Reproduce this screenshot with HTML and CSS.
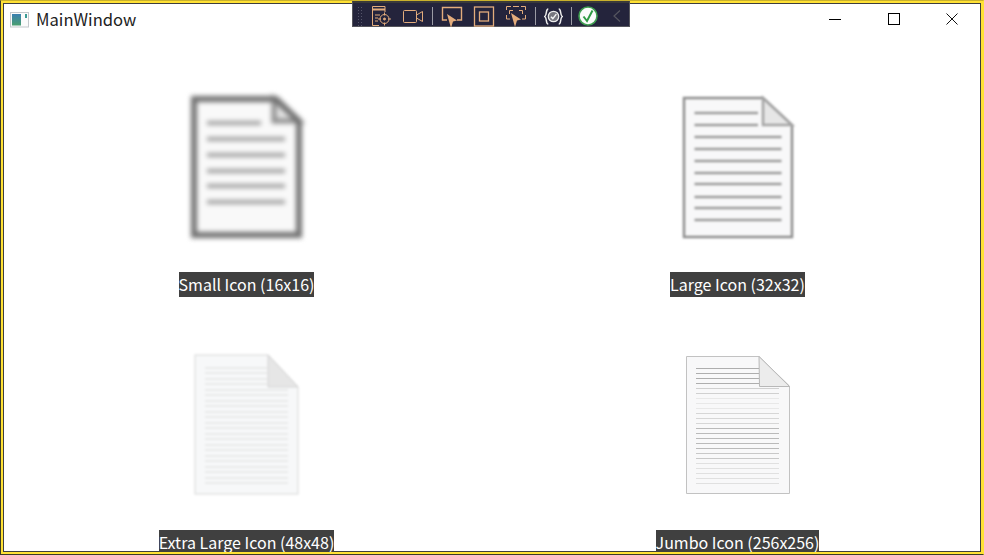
FILE: index.html
```html
<!DOCTYPE html>
<html lang="en">
<head>
<meta charset="utf-8">
<title>MainWindow</title>
<link rel="stylesheet" href="styles.css">
</head>
<body>
<div class="screen">
  <div class="frame">
    <div class="window">
      <header class="titlebar">
        <svg class="app-icon" width="20" height="16" viewBox="0 0 20 16">
          <defs><linearGradient id="appg" x1="0" y1="0" x2="0" y2="1"><stop offset="0" stop-color="#3a7fb0"/><stop offset="1" stop-color="#4a9f70"/></linearGradient></defs>
          <rect x="0.500" y="0.500" width="18" height="14.500" fill="#fbfbfb" stroke="#c4c8cc"/>
          <rect x="2" y="2" width="9" height="11.500" fill="url(#appg)"/>
          <rect x="15" y="2" width="2" height="4" fill="#3b9a94"/>
        </svg>
        <span class="title">MainWindow</span>
        <div class="controls">
          <button class="control" aria-label="Minimize"><svg width="12" height="12" viewBox="0 0 12 12"><path d="M0 6.500h12" stroke="#000" fill="none"/></svg></button>
          <button class="control" aria-label="Maximize"><svg width="12" height="12" viewBox="0 0 12 12"><rect x=".5" y=".5" width="11" height="11" stroke="#000" fill="none"/></svg></button>
          <button class="control" aria-label="Close"><svg width="12" height="12" viewBox="0 0 12 12"><path d="M.5.5l11 11M11.500.5l-11 11" stroke="#111" fill="none"/></svg></button>
        </div>
      </header>
      <main class="grid">
        <section class="cell">
          <svg class="doc blur-strong" width="148" height="148" viewBox="0 0 148 148">
            <path d="M21 7H103L126 29V143H21Z" fill="#f9f9f9"/>
            <path d="M101 7V29H126Z" fill="#e4e4e4" stroke="#8c8c8c" stroke-width="5"/>
            <path d="M21 7H103L126 29V143H21Z" fill="none" stroke="#707070" stroke-width="6"/>
            <path d="M34 31H88M34 47H112M34 63H112M34 79H112M34 94H112M34 110H112" stroke="#9c9c9c" stroke-width="4" fill="none"/>
          </svg>
          <span class="label">Small Icon (16x16)</span>
        </section>
        <section class="cell">
          <svg class="doc blur-mid" width="148" height="148" viewBox="1 0 148 148">
            <path d="M21 6H100L129 33V145H21Z" fill="#f8f8f9" stroke="#8e8e8e" stroke-width="2.500"/>
            <path d="M100 6L129 33H100Z" fill="#e6e6e6" stroke="#a4a4a4" stroke-width="2.500"/>
            <path d="M31.500 21H95M31.500 33H95M31.500 45H118.500M31.500 57H118.500M31.500 69H118.500M31.500 81H118.500M31.500 92H118.500M31.500 105H118.500M31.500 116H118.500M31.500 128H118.500" stroke="#9c9c9c" stroke-width="2.400" fill="none"/>
          </svg>
          <span class="label">Large Icon (32x32)</span>
        </section>
        <section class="cell">
          <svg class="doc blur-soft" width="148" height="148" viewBox="0 0 148 148">
            <path d="M22 5H95L125 37V144H22Z" fill="#f7f8f9" stroke="#e4e4e4" stroke-width="1.500"/>
            <path d="M95 5L125 37H95Z" fill="#e6e6e6" stroke="#d4d4d4"/>
            <path d="M32 18H94M32 23H94M32 29H94M32 34H94M32 40H115M32 45H115M32 51H115M32 56H115M32 62H115M32 67H115M32 73H115M32 78H115M32 84H115M32 89H115M32 95H115M32 100H115M32 106H115M32 111H115M32 117H115M32 122H115M32 128H115M32 133H115" stroke="#dcdcdc" stroke-width="1.200" fill="none"/>
          </svg>
          <span class="label">Extra Large Icon (48x48)</span>
        </section>
        <section class="cell">
          <svg class="doc" width="148" height="148" viewBox="1 0 148 148">
            <path d="M23.500 6.500H96L126.500 36V143.500H23.500Z" fill="#f8f8f9" stroke="#c2c2c2"/>
            <path d="M96 6.500L126.500 36.500H96.500Z" fill="#ececec" stroke="#b8b8b8"/>
            <g stroke-width="1" fill="none">
              <path d="M33 18.500H96M33 23.500H96M33 28.500H96M33 33.500H96" stroke="#aeaeae"/>
              <path d="M33 38.500H116M33 43.500H116" stroke="#d0d0d0"/>
              <path d="M33 48.500H116M33 53.500H116M33 58.500H116" stroke="#e8e8e8"/>
              <path d="M33 63.500H116M33 68.500H116M33 73.500H116" stroke="#d6d6d6"/>
              <path d="M33 78.500H116M33 83.500H116M33 88.500H116M33 93.500H116M33 98.500H116" stroke="#bababa"/>
              <path d="M33 103.500H116M33 108.500H116" stroke="#c8c8c8"/>
              <path d="M33 113.500H116M33 118.500H116M33 123.500H116M33 128.500H116M33 133.500H116" stroke="#e0e0e0"/>
            </g>
          </svg>
          <span class="label">Jumbo Icon (256x256)</span>
        </section>
      </main>
    </div>
  </div>
  <div class="toolbar">
    <span class="grip"></span>
    <div class="tool-group">
      <svg class="tool" width="22" height="22" viewBox="0 0 22 22" fill="none" stroke="#e3ac7c">
        <path d="M9 20.500H2.500V1.500H15V7" /><path d="M3 4.500h12" stroke-width="2"/><path d="M5 10h5M5 13h3M5 16h3"/><circle cx="14.500" cy="14" r="4.500"/><path d="M14.500 7.500v3M14.500 17.500v3M8 14h3M18 14h3"/><circle cx="14.500" cy="14" r="1" fill="#e3ac7c"/>
      </svg>
      <svg class="tool" width="22" height="22" viewBox="0 0 22 22" fill="none" stroke="#e3ac7c">
        <rect x="1.500" y="5.500" width="13" height="12" rx="1"/><path d="M14.500 10L20.500 6.500V16.500L14.500 13"/>
      </svg>
    </div>
    <span class="sep"></span>
    <div class="tool-group">
      <svg class="tool" width="22" height="22" viewBox="0 0 22 22" fill="none" stroke="#e3ac7c">
        <path d="M6 15H1.500V2.500H20.500V15H16" stroke-width="1.400"/><path d="M6 9L16 15.500L12 16.500L10 23Z" fill="#e3ac7c" stroke="none"/>
      </svg>
      <svg class="tool" width="22" height="22" viewBox="0 0 22 22" fill="none" stroke="#e3ac7c">
        <rect x="1.500" y="2" width="19" height="19" stroke-width="1.300"/><rect x="6.500" y="7" width="9" height="9" stroke-width="1.300"/>
      </svg>
      <svg class="tool" width="22" height="22" viewBox="0 0 22 22" fill="none" stroke="#e3ac7c">
        <path d="M1.500 5V1.500H6M16 1.500H20.500V5M1.500 10V14H5M20.500 10V14H17M8 1.500h6M8 5.500H4.500V9M14 5.500H17.500V9"/><path d="M6 8L16 14.500L12 15.500L10 22Z" fill="#e3ac7c" stroke="none"/>
      </svg>
    </div>
    <span class="sep"></span>
    <svg class="tool-narrow" width="19" height="21" viewBox="0 0 20 22" fill="none" stroke="#ececec">
      <path d="M4.500 3C1.500 3 3.500 9 .8 11C3.500 13 1.500 19 4.500 19M15.500 3C18.500 3 16.500 9 19.200 11C16.500 13 18.500 19 15.500 19" stroke-width="1.600"/>
      <circle cx="10" cy="11" r="5.500" fill="#77777f" stroke="#ececec" stroke-width="1.300"/><path d="M7.300 11.200L9.300 13.200L13 8.500" stroke="#f4f4f4" stroke-width="1.500"/>
    </svg>
    <span class="sep"></span>
    <svg class="tool-check" width="20" height="20" viewBox="0 0 20 20" fill="none">
      <circle cx="10" cy="10" r="9" fill="#fbfbfb" stroke="#3f9e50" stroke-width="1.600"/>
      <path d="M5.500 10.500L9 15L14.500 4.500" stroke="#2f9a44" stroke-width="2"/>
    </svg>
    <svg class="tool-chevron" width="10" height="14" viewBox="0 0 10 14" fill="none"><path d="M8 1.500L2 7L8 12.500" stroke="#55555f" stroke-width="1.200"/></svg>
  </div>
</div>
</body>
</html>
```
FILE: styles.css
```css
* { box-sizing: border-box; }
html, body { margin: 0; padding: 0; background: #333; }
.screen {
  position: relative;
  width: 984px;
  height: 555px;
  border-style: solid;
  border-width: 1px;
  border-color: #c9b12c #ffe135 #3c3c26 #3c3c26;
  overflow: hidden;
}
.frame {
  height: 100%;
  border: 2px solid #ffe135;
  overflow: hidden;
}
.window {
  height: 100%;
  border: 1px solid #3e3e3e;
  background: #fff;
  font-family: "Noto Sans CJK JP", "Noto Sans", sans-serif;
  font-size: 16px;
}
.titlebar {
  display: flex;
  align-items: center;
  height: 30px;
  padding-left: 6px;
  color: #222;
}
.app-icon { flex: none; margin-top: 1px; }
.title { margin-left: 6px; font-size: 16.600px; line-height: 30px; }
.controls { display: flex; margin-left: auto; margin-right: -1.500px; }
.control {
  display: flex;
  align-items: center;
  justify-content: center;
  width: 58.500px;
  height: 30px;
  padding: 0;
  border: 0;
  background: none;
}
.grid {
  display: grid;
  grid-template-columns: 485px 485px;
  column-gap: 6px;
  row-gap: 53px;
  padding-top: 58px;
}
.cell {
  display: flex;
  flex-direction: column;
  align-items: center;
  gap: 32px;
}
.doc { display: block; }
.blur-strong { filter: blur(2.400px); }
.blur-mid { filter: blur(0.900px); }
.blur-soft { filter: blur(1px); }
.label {
  display: block;
  height: 25px;
  background: #404040;
  color: #fff;
  font-size: 16px;
  line-height: 25px;
  white-space: nowrap;
}
.toolbar {
  position: absolute;
  top: -1px;
  left: 351px;
  display: flex;
  align-items: center;
  gap: 8px;
  width: 278px;
  height: 27px;
  padding: 3px 0 0 4px;
  background: #24243c;
  border: 1px solid #55555c;
  border-top: 3px solid #3a3a3a;
}
.grip {
  width: 5px;
  height: 20px;
  background-image: radial-gradient(circle, #55556a 1px, transparent 1px);
  background-size: 3px 3px;
}
.tool-group { display: flex; gap: 10px; }
.tool { display: block; }
.sep { width: 1px; height: 18px; background: #9a9aa4; }
.tool-check { margin-left: -2px; }
.tool-chevron { margin-left: 6px; }
```
